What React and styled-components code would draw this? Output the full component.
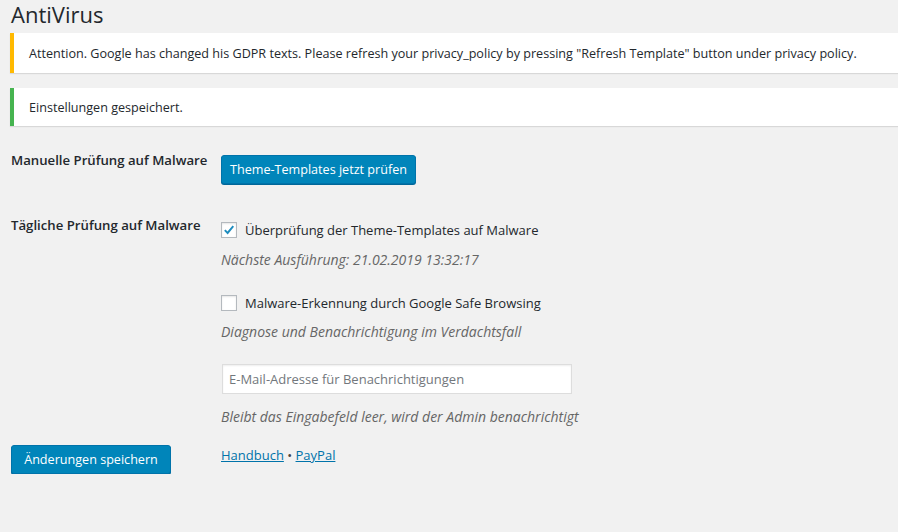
import React from 'react';
import styled, { createGlobalStyle } from 'styled-components';

const Global = createGlobalStyle`
  html, body { margin: 0; background: #f1f1f1; }
  body {
    font-family: "Open Sans", "Noto Sans", sans-serif;
    color: #23282d;
    font-size: 13px;
    overflow: hidden;
  }
`;

const Wrap = styled.div`
  padding: 0 0 0 10px;
  margin-right: -20px;
`;

const Title = styled.h1`
  font-size: 22px;
  font-weight: 400;
  margin: 0;
  padding: 2px 0 0 1px;
  line-height: 24px;
  height: 26px;
`;

const Notice = styled.div`
  background: #fff;
  border-left: 4px solid ${(p) => (p.$type === 'warning' ? '#ffb900' : '#46b450')};
  box-shadow: 0 1px 1px rgba(0, 0, 0, 0.1);
  margin: ${(p) => p.$mt}px 0 0;
  padding: 0 12px 0 15px;
  height: ${(p) => p.$h}px;
  display: flex;
  align-items: center;
`;

const NoticeText = styled.p`
  margin: 0;
  font-size: 12.6px;
  white-space: nowrap;
`;

const Form = styled.div`
  display: grid;
  grid-template-columns: 210px 1fr;
  padding-left: 1px;
  margin-top: 25px;
`;

const Label = styled.div`
  font-weight: 600;
  font-size: 13.2px;
  line-height: 19px;
  white-space: nowrap;
  padding-top: ${(p) => p.$pt || 0}px;
`;

const Cell = styled.div`
  display: flex;
  flex-direction: column;
  align-items: flex-start;
  padding-top: ${(p) => p.$pt || 0}px;
`;

const Button = styled.button`
  font-family: inherit;
  font-size: 12.6px;
  white-space: nowrap;
  background: #0085ba;
  border: 1px solid #0073aa;
  border-radius: 3px;
  box-shadow: 0 1px 0 #006799;
  color: #fff;
  height: 29px;
  padding: 0;
  width: ${(p) => p.$w}px;
  cursor: pointer;
`;

const Check = styled.label`
  display: flex;
  align-items: center;
  gap: 8px;
  font-size: 13px;
  height: 18px;
  margin-top: ${(p) => p.$mt || 0}px;
`;

const Box = styled.span`
  width: 16px;
  height: 16px;
  box-sizing: border-box;
  border: 1px solid #b4b9be;
  background: #fff;
  box-shadow: inset 0 1px 2px rgba(0, 0, 0, 0.1);
  display: flex;
  align-items: center;
  justify-content: center;
`;

const Desc = styled.p`
  margin: ${(p) => p.$mt || 0}px 0 0;
  font-style: italic;
  color: #666;
  font-size: 14px;
  line-height: 20px;
`;

const Input = styled.input`
  font-family: inherit;
  font-size: 13px;
  width: 350px;
  height: 30px;
  box-sizing: border-box;
  border: 1px solid #ddd;
  box-shadow: inset 0 1px 2px rgba(0, 0, 0, 0.07);
  background: #fff;
  padding: 3px 6px;
  margin: 22px 0 0 1px;
  &::placeholder { color: #72777c; }
`;

const Links = styled.div`
  font-size: 13px;
  color: #444;
  a { color: #0073aa; text-decoration: underline; }
`;

const Tick = () => (
  <svg width="16" height="16" viewBox="0 0 16 16">
    <path d="M3.2 8.2 L6.4 11.4 L12.9 3.6" fill="none" stroke="#1e8cbe" strokeWidth="2.2" />
  </svg>
);

export default function App() {
  return (
    <>
      <Global />
      <Wrap>
        <Title>AntiVirus</Title>
        <Notice $type="warning" $mt={5} $h={40}>
          <NoticeText>
            Attention. Google has changed his GDPR texts. Please refresh your privacy_policy by pressing "Refresh Template" button under privacy policy.
          </NoticeText>
        </Notice>
        <Notice $type="success" $mt={15} $h={38}>
          <NoticeText>Einstellungen gespeichert.</NoticeText>
        </Notice>
        <Form>
          <Label>Manuelle Prüfung auf Malware</Label>
          <Cell $pt={4}>
            <Button $w={195}>Theme-Templates jetzt prüfen</Button>
          </Cell>
          <Label $pt={32}>Tägliche Prüfung auf Malware</Label>
          <Cell $pt={37}>
            <Check>
              <Box><Tick /></Box>
              Überprüfung der Theme-Templates auf Malware
            </Check>
            <Desc $mt={11}>Nächste Ausführung: 21.02.2019 13:32:17</Desc>
            <Check $mt={24}>
              <Box />
              Malware-Erkennung durch Google Safe Browsing
            </Check>
            <Desc $mt={10}>Diagnose und Benachrichtigung im Verdachtsfall</Desc>
            <Input placeholder="E-Mail-Adresse für Benachrichtigungen" />
            <Desc $mt={13}>Bleibt das Eingabefeld leer, wird der Admin benachrichtigt</Desc>
          </Cell>
          <Cell $pt={18}>
            <Button $w={160}>Änderungen speichern</Button>
          </Cell>
          <Cell $pt={19}>
            <Links>
              <a href="#">Handbuch</a> • <a href="#">PayPal</a>
            </Links>
          </Cell>
        </Form>
      </Wrap>
    </>
  );
}
